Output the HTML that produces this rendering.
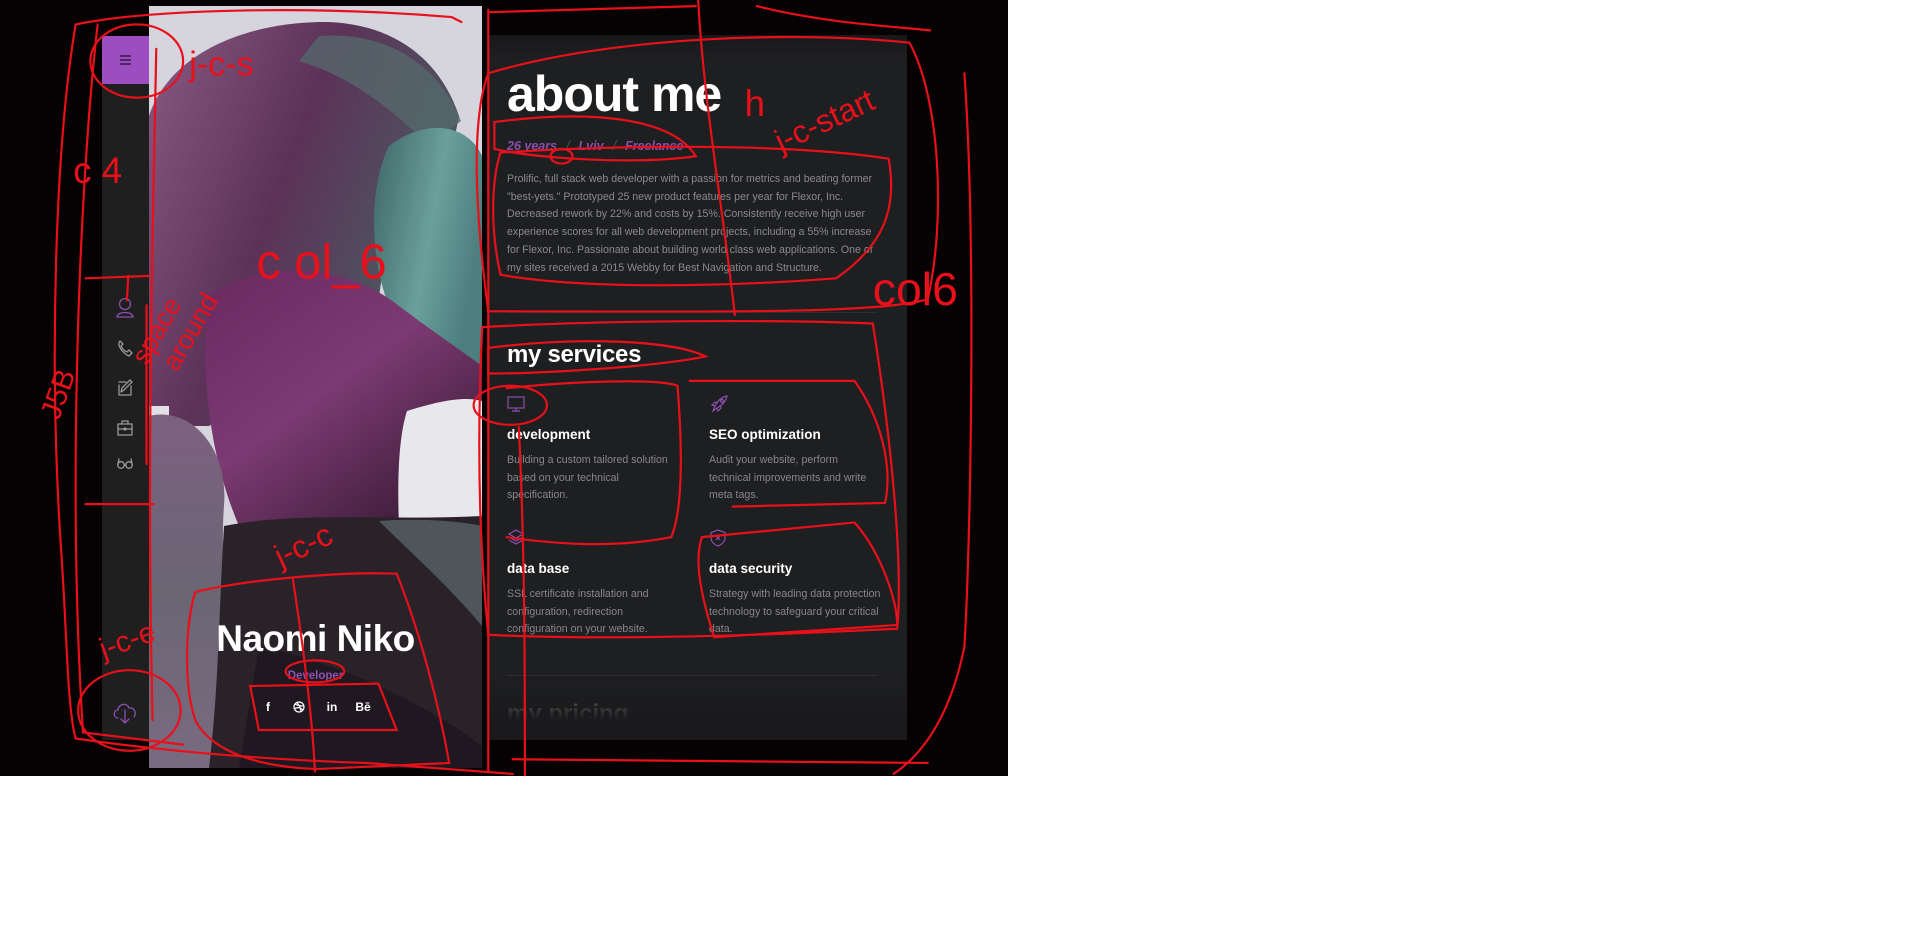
<!DOCTYPE html>
<html><head><meta charset="utf-8"><style>
*{margin:0;padding:0;box-sizing:border-box}
html,body{width:1914px;height:936px;background:#fff;overflow:hidden;font-family:"Liberation Sans",Arial,sans-serif}
#dark{position:absolute;left:0;top:0;width:1008px;height:776px;background:#060102}
#side{position:absolute;left:102px;top:36px;width:47px;height:704px;background:#1f1f20}
#menu{position:absolute;left:102px;top:36px;width:47px;height:48px;background:#9c4dc0}
#photo{position:absolute;left:149px;top:6px;width:333px;height:762px;overflow:hidden}
#panel{position:absolute;left:489px;top:35px;width:418px;height:705px;background:#1e1f21;overflow:hidden}
.t{position:absolute;white-space:nowrap}
#abt{left:18px;top:30px;font-size:50px;font-weight:bold;color:#fff;letter-spacing:-1px}
#meta{left:18px;top:104px;font-size:12.5px;font-style:italic;font-weight:bold;color:#8a4fae}
#meta span{color:#555;font-weight:normal;margin:0 9px}
#para{position:absolute;left:18px;top:136px;width:374px;font-size:10.6px;line-height:17.7px;color:#8a8a8c}
.hr{position:absolute;left:18px;width:370px;height:1px;background:#2c2d30}
#svc{left:18px;top:306px;font-size:24px;font-weight:bold;color:#fff;letter-spacing:-.3px}
.card{position:absolute;width:170px}
.card h4{position:absolute;top:32px;font-size:13.5px;color:#fff;white-space:nowrap}
.card p{position:absolute;top:57px;width:172px;font-size:10.6px;line-height:17.7px;color:#88888a}
.card svg{position:absolute;left:0;top:0}
#pr{left:18px;top:665px;font-size:24px;font-weight:bold;color:#8a8a8a}
#fadeb{position:absolute;left:0;top:640px;width:418px;height:65px;background:linear-gradient(rgba(30,31,33,0),#1a1a1c 70%)}
#fadet{position:absolute;left:0;top:0;width:418px;height:25px;background:linear-gradient(#18181a,rgba(30,31,33,0))}
#name{position:absolute;left:149px;width:333px;top:618px;text-align:center;font-size:37px;font-weight:bold;color:#fff;letter-spacing:-.5px}
#dev{position:absolute;left:149px;width:333px;top:670px;text-align:center;font-size:11.5px;font-weight:bold;color:#8d52b3}
.soc{position:absolute;top:700px;color:#fff;font-size:12px;font-weight:bold;text-align:center;width:20px}
#red{position:absolute;left:0;top:0}
</style></head><body>
<div id="dark"></div>
<div id="photo">
<svg width="333" height="762" viewBox="0 0 333 762">
<defs>
<linearGradient id="face" x1="0" y1="0" x2="1" y2="0.4"><stop offset="0" stop-color="#3f6667"/><stop offset="0.6" stop-color="#6aa09c"/><stop offset="1" stop-color="#4d7f7f"/></linearGradient>
<linearGradient id="neck" x1="0" y1="0" x2="0.8" y2="1"><stop offset="0" stop-color="#6a2a60"/><stop offset="0.5" stop-color="#7b3a72"/><stop offset="1" stop-color="#3a1b36"/></linearGradient>
<linearGradient id="hair" x1="0" y1="0" x2="1" y2="0.5"><stop offset="0" stop-color="#8a5a84"/><stop offset="0.5" stop-color="#5c3258"/><stop offset="1" stop-color="#4a5e62"/></linearGradient>
<linearGradient id="braid" x1="0" y1="0" x2="0" y2="1"><stop offset="0" stop-color="#7d6080"/><stop offset="0.5" stop-color="#6a6674"/><stop offset="1" stop-color="#7a6a80"/></linearGradient>
</defs>
<rect width="333" height="762" fill="#d6d4dc"/>
<path d="M0,110 C20,50 90,18 170,16 C240,15 290,50 310,110 L300,160 C250,200 230,260 230,300 L60,420 L0,420 Z" fill="url(#hair)"/>
<path d="M170,30 C240,25 290,60 312,115 L280,140 C240,100 200,70 150,55 Z" fill="#55686c" opacity=".8"/>
<path d="M240,140 C280,110 320,120 333,150 L333,360 C300,340 270,330 240,300 C220,250 220,180 240,140 Z" fill="url(#face)"/>
<path d="M60,290 C120,250 200,260 250,300 C290,330 320,350 333,360 L333,400 C300,410 270,440 250,520 L90,520 C60,450 50,360 60,290 Z" fill="url(#neck)"/>
<path d="M258,405 C290,395 315,390 333,395 L333,520 L250,520 C248,470 250,430 258,405 Z" fill="#e8e7ec"/>
<path d="M0,400 L20,400 L20,500 L0,500 Z" fill="#e2e0e6"/>
<path d="M0,410 C40,400 80,440 75,500 C70,560 85,650 60,762 L0,762 Z" fill="url(#braid)"/>
<path d="M75,520 C150,505 240,515 333,510 L333,762 L60,762 C70,680 70,600 75,520 Z" fill="#2a2229"/>
<path d="M230,515 C270,512 310,515 333,520 L333,620 C300,580 260,545 230,515 Z" fill="#4e555b"/>
<path d="M110,640 C200,660 280,700 333,740 L333,762 L90,762 Z" fill="#1f1820"/>
</svg>
</div>
<div id="side"></div>
<div id="menu"><svg width="47" height="48"><g stroke="#2a1035" stroke-width="1.3"><line x1="18" y1="20" x2="29" y2="20"/><line x1="18" y1="24" x2="29" y2="24"/><line x1="18" y1="28" x2="29" y2="28"/></g></svg></div>
<svg style="position:absolute;left:102px;top:293px" width="47" height="190" fill="none" stroke-width="1.3" stroke-linecap="round" stroke-linejoin="round">
<g stroke="#8a4fae"><circle cx="23" cy="11" r="5.5"/><path d="M15,24 C15,18 31,18 31,24 Z"/></g>
<g stroke="#9a9a9c">
<path d="M17,50 C16,54 22,61 27,63 L30,60 L27,57 L25,59 C22,58 20,55 19,53 L21,51 L18,48 Z"/>
<path d="M17,92 L17,102 L29,102 L29,93 M19,99 L20,95 L28,87 L30,89 L22,97 Z M17,89 L24,89"/>
<rect x="16" y="131" width="14" height="11"/><path d="M20,131 L20,128 L26,128 L26,131 M16,136 L30,136"/><circle cx="23" cy="136" r="1"/>
<circle cx="19" cy="172" r="3.3"/><circle cx="27" cy="172" r="3.3"/><path d="M22,172 L24,172 M15.7,172 L17,166 M30.3,172 L29,166"/>
</g></svg>
<svg style="position:absolute;left:102px;top:696px" width="47" height="34" fill="none" stroke="#8a4fae" stroke-width="1.3" stroke-linecap="round">
<path d="M16,22 C11,22 11,14 16,14 C16,8 25,6 27,12 C32,11 35,17 32,21 M23,14 L23,27 M19,23 L23,27 L27,23"/></svg>
<div id="name">Naomi Niko</div>
<div id="dev">Developer</div>
<div class="soc" style="left:258px">f</div>
<svg style="position:absolute;left:293px;top:701px" width="12" height="12" fill="none" stroke="#fff" stroke-width="1.2"><circle cx="6" cy="6" r="5"/><path d="M2,3 C5,5 9,5 11,5 M4,1.5 C7,5 8,8 8,11 M1,8 C4,6 7,6 10,9"/></svg>
<div class="soc" style="left:322px">in</div>
<div class="soc" style="left:353px">Bē</div>
<div id="panel">
<div id="fadet"></div>
<div class="t" id="abt">about me</div>
<div class="t" id="meta">26 years<span>/</span>Lviv<span>/</span>Freelance</div>
<div id="para">Prolific, full stack web developer with a passion for metrics and beating former "best-yets." Prototyped 25 new product features per year for Flexor, Inc. Decreased rework by 22% and costs by 15%. Consistently receive high user experience scores for all web development projects, including a 55% increase for Flexor, Inc. Passionate about building world class web applications. One of my sites received a 2015 Webby for Best Navigation and Structure.</div>
<div class="hr" style="top:277px"></div>
<div class="t" id="svc">my services</div>
<div class="card" style="left:18px;top:360px"><svg width="22" height="20" fill="none" stroke="#8a4fae" stroke-width="1.2"><rect x="1" y="2" width="16" height="11"/><path d="M9,13 L9,16 M5,16 L13,16"/></svg><h4>development</h4><p>Building a custom tailored solution based on your technical specification.</p></div>
<div class="card" style="left:220px;top:360px"><svg width="22" height="20" fill="none" stroke="#8a4fae" stroke-width="1.2"><path d="M4,16 L6,11 C9,5 13,2 18,1 C17,6 14,10 8,13 Z M6,11 L3,10 L6,7 L9,8 M8,13 L9,16 L12,13 L11,10"/><circle cx="13" cy="6" r="1.5"/></svg><h4>SEO optimization</h4><p>Audit your website, perform technical improvements and write meta tags.</p></div>
<div class="card" style="left:18px;top:494px"><svg width="22" height="20" fill="none" stroke="#8a4fae" stroke-width="1.2"><path d="M9,1 L16,5 L9,9 L2,5 Z M2,8 L9,12 L16,8 M2,11 L9,15 L16,11"/></svg><h4>data base</h4><p>SSL certificate installation and configuration, redirection configuration on your website.</p></div>
<div class="card" style="left:220px;top:494px"><svg width="22" height="20" fill="none" stroke="#8a4fae" stroke-width="1.2"><path d="M9,1 L16,3.5 L16,9 C16,13 12,16 9,17 C6,16 2,13 2,9 L2,3.5 Z M7,7 L11,11 M11,7 L7,11"/></svg><h4>data security</h4><p>Strategy with leading data protection technology to safeguard your critical data.</p></div>
<div class="hr" style="top:640px"></div>
<div class="t" id="pr">my pricing</div>
<div id="fadeb"></div>
</div>
<svg id="red" width="1914" height="936" fill="none" stroke="#e8101a" stroke-width="1.8" stroke-linecap="round">
<g transform="scale(1.2207)">
<path d="M62,20 C120,8 250,4 370,14 L378,18"/>
<path d="M62,20 C45,120 40,300 50,450 C55,520 55,580 62,605 C110,612 200,622 300,625 L420,634"/>
<path d="M80,20 C65,150 55,400 68,600 L150,610"/>
<path d="M128,40 C125,200 120,380 125,590"/>
<ellipse cx="112" cy="50" rx="38" ry="30"/>
<path d="M70,228 L122,226 M105,226 L104,246 M70,413 L126,413 M120,380 L120,250"/>
<ellipse cx="106" cy="582" rx="42" ry="33"/>
<path d="M160,485 C200,475 280,468 325,470 C345,520 360,580 368,625 L260,630 C200,628 170,610 160,590 C150,560 152,510 160,485 Z"/>
<path d="M205,562 L310,560 L325,598 L212,598 Z"/>
<ellipse cx="258" cy="550" rx="24" ry="9"/>
<path d="M240,475 C250,540 256,590 258,632"/>
<path d="M400,8 L400,632 M400,10 L570,5 M620,5 C680,20 740,22 762,25"/>
<path d="M572,0 C576,80 592,170 602,258"/>
<path d="M400,60 C500,30 650,25 745,35 C770,80 775,180 760,245 C720,258 560,255 400,255 C390,180 385,100 400,60 Z"/>
<path d="M405,100 C480,90 550,95 570,128 C520,135 440,130 405,122 Z"/>
<path d="M410,125 C520,118 650,118 728,130 C735,170 725,200 685,228 C580,236 470,236 410,225 C402,190 402,150 410,125 Z"/>
<path d="M395,268 C500,262 640,262 715,265 C730,360 740,460 735,515 C640,520 500,525 400,520 C390,420 392,330 395,268 Z"/>
<path d="M400,285 C470,276 550,278 578,292 C540,300 450,306 400,306 Z"/>
<path d="M415,318 C470,312 540,310 555,316 C560,380 558,420 550,440 C500,450 450,445 415,440"/>
<path d="M565,312 L700,312 C720,340 732,380 725,412 L600,415"/>
<path d="M575,440 L700,428 C720,450 735,490 735,512 L585,522 C575,490 568,460 575,440 Z"/>
<ellipse cx="418" cy="332" rx="30" ry="16"/>
<path d="M420,622 L760,625 M425,350 C430,450 430,550 430,635"/>
<path d="M790,60 C800,200 795,450 790,530 C780,580 760,615 732,634"/>
<ellipse cx="460" cy="128" rx="9" ry="6"/>
</g>
<g fill="#e8101a" stroke="none" font-family="Liberation Sans, sans-serif" transform="scale(1.2207)">
<text x="155" y="62" font-size="28">j-c-s</text>
<text x="60" y="150" font-size="30">c 4</text>
<text x="210" y="228" font-size="40">c ol_6</text>
<text x="715" y="250" font-size="38">col6</text>
<text x="610" y="95" font-size="30">h</text>
<text x="640" y="125" font-size="26" transform="rotate(-25 640 125)">j-c-start</text>
<text x="120" y="300" font-size="22" transform="rotate(-60 120 300)">space</text>
<text x="145" y="305" font-size="22" transform="rotate(-60 145 305)">around</text>
<text x="48" y="345" font-size="24" transform="rotate(-70 48 345)">J5B</text>
<text x="230" y="465" font-size="26" transform="rotate(-25 230 465)">j-c-c</text>
<text x="85" y="540" font-size="24" transform="rotate(-20 85 540)">j-c-e</text>
</g>
</svg>
</body></html>
